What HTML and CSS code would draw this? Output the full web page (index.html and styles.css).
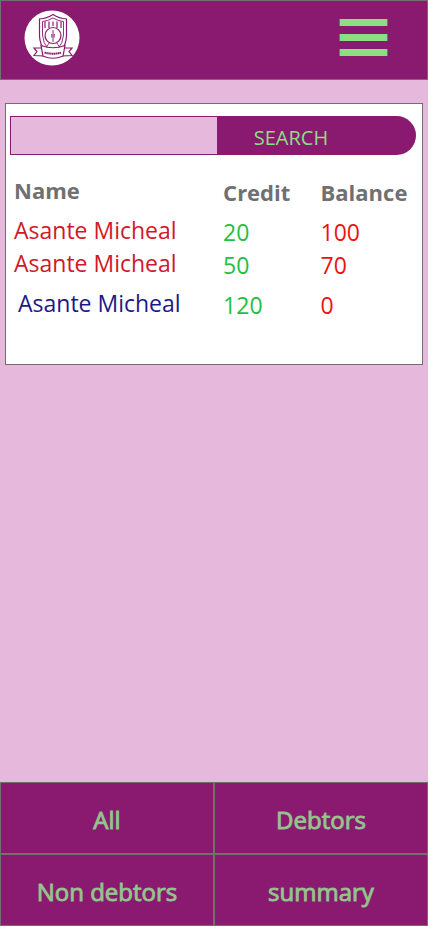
FILE: index.html
```html
<!DOCTYPE html>
<html lang="en">
<head>
<meta charset="utf-8">
<meta name="viewport" content="width=device-width, initial-scale=1">
<title>Debtors</title>
<link rel="stylesheet" href="styles.css">
</head>
<body>
<header class="topbar">
  <svg class="crest" viewBox="0 0 56 56" role="img" aria-label="School crest">
    <circle cx="28" cy="28" r="27.500" fill="#fff"/>
    <g fill="none" stroke="#8a1a70" stroke-width="1.200">
      <path d="M15.500 9Q23 8.500 29 4.500Q35 8.500 42.500 9V26Q42 35 37 41H21Q16 35 15.500 26Z"/>
      <path d="M18.500 11.500Q24 11 29 8Q34 11 39.500 11.500V25Q39 33 34 39H24Q19 33 18.500 25Z" stroke-width=".9"/>
      <path d="M21 11.500V18M25 11.500V18M29 11.500V16M33 11.500V18M37 11.500V18" stroke-width="1.200"/>
      <circle cx="29" cy="25.500" r="8"/>
      <path d="M29 20V32M27.800 24V27.500M30.200 24V27.500" stroke-width=".9"/>
      <path d="M25 33L22 38M33 33L36 38" stroke-width=".8"/>
      <path d="M18 38L10 38L13 41.500L10 45.500L20 46M40 38L48 38L45 41.500L48 45.500L38 46" fill="#fff"/>
      <path d="M17 35.500Q29 40 41 35.500L39 46Q29 50.500 19 46Z" fill="#fff"/>
      <path d="M20.500 42.500Q29 45 37.500 42.500" stroke-width="2" stroke-dasharray="1.500 .4"/>
    </g>
  </svg>
  <button class="menu" type="button" aria-label="Menu">
    <span class="menu-bar"></span>
    <span class="menu-bar"></span>
    <span class="menu-bar"></span>
  </button>
</header>

<main class="content">
  <section class="card">
    <form class="search">
      <input class="search-input" type="text" aria-label="Search by name">
      <button class="search-button" type="submit">SEARCH</button>
    </form>
    <table class="accounts">
      <thead>
        <tr><th class="name" scope="col">Name</th><th class="amount" scope="col">Credit</th><th class="amount" scope="col">Balance</th></tr>
      </thead>
      <tbody class="owing">
        <tr><td class="name">Asante Micheal</td><td class="amount credit">20</td><td class="amount balance">100</td></tr>
        <tr><td class="name">Asante Micheal</td><td class="amount credit">50</td><td class="amount balance">70</td></tr>
      </tbody>
      <tbody class="cleared">
        <tr><td class="name">Asante Micheal</td><td class="amount credit">120</td><td class="amount balance">0</td></tr>
      </tbody>
    </table>
  </section>
</main>

<nav class="filters" aria-label="Filters">
  <button class="filter" type="button">All</button>
  <button class="filter" type="button">Debtors</button>
  <button class="filter" type="button">Non debtors</button>
  <button class="filter" type="button">summary</button>
</nav>
</body>
</html>
```
FILE: styles.css
```css
* {
  box-sizing: border-box;
}

body {
  display: flex;
  flex-direction: column;
  min-height: 100vh;
  margin: 0;
  background: #e6b8dc;
  color: #707070;
  font-family: "Open Sans", "Noto Sans", sans-serif;
  font-size: 23px;
}

button,
input {
  margin: 0;
  padding: 0;
  border: 0;
  border-radius: 0;
  font: inherit;
}

button {
  cursor: pointer;
}

.topbar {
  display: flex;
  align-items: flex-start;
  justify-content: space-between;
  height: 80px;
  padding: 9px 39px 0 23px;
  border: 1px solid #707070;
  background: #8a1a70;
}

.crest {
  width: 56px;
  height: 56px;
}

.menu {
  display: flex;
  flex-direction: column;
  gap: 8px;
  width: 49px;
  padding-top: 9px;
  background: none;
}

.menu-bar {
  height: 7px;
  border: solid #707070;
  border-width: 0 1px;
  background: #8adf82;
}

.content {
  flex: 1;
  padding: 23px 5px;
}

.card {
  min-height: 262px;
  padding: 12px 6px 37px 4px;
  border: 1px solid #707070;
  background: #fff;
}

.search {
  display: grid;
  grid-template-columns: 208fr 198fr;
  height: 39px;
}

.search-input {
  min-width: 0;
  padding: 0 8px;
  border: 1px solid #8a1a70;
  background: #e6b8dc;
}

.search-button {
  padding: 4px 52px 0 0;
  border-radius: 0 20px 20px 0;
  background: #8a1a70;
  color: #8adf82;
  font-size: 20px;
}

.accounts {
  width: 100%;
  margin-top: 19px;
  border-collapse: collapse;
  table-layout: fixed;
  line-height: 29px;
}

.accounts th,
.accounts td {
  padding: 2px 0;
  text-align: left;
  vertical-align: top;
}

.accounts .name {
  width: 52%;
  padding-left: 4px;
}

.accounts .amount {
  width: 24%;
  padding-top: 4px;
  padding-bottom: 0;
  padding-left: 2px;
}

.accounts thead th {
  height: 40px;
  font-size: 22px;
}

.accounts .cleared::before {
  content: "";
  display: table-row;
  height: 7px;
}

.owing .name {
  color: #d0182a;
}

.accounts .cleared .name {
  padding-left: 8px;
  color: #201885;
}

.credit {
  color: #1fc044;
}

.balance {
  color: #ee1111;
}

.filters {
  display: grid;
  grid-template-columns: 1fr 1fr;
}

.filter {
  height: 72px;
  padding-top: 2px;
  border: 1px solid #707070;
  background: #8a1a70;
  color: #90c888;
  font-size: 24px;
  -webkit-text-stroke: 1px #9aae94;
  paint-order: stroke fill;
}
```
